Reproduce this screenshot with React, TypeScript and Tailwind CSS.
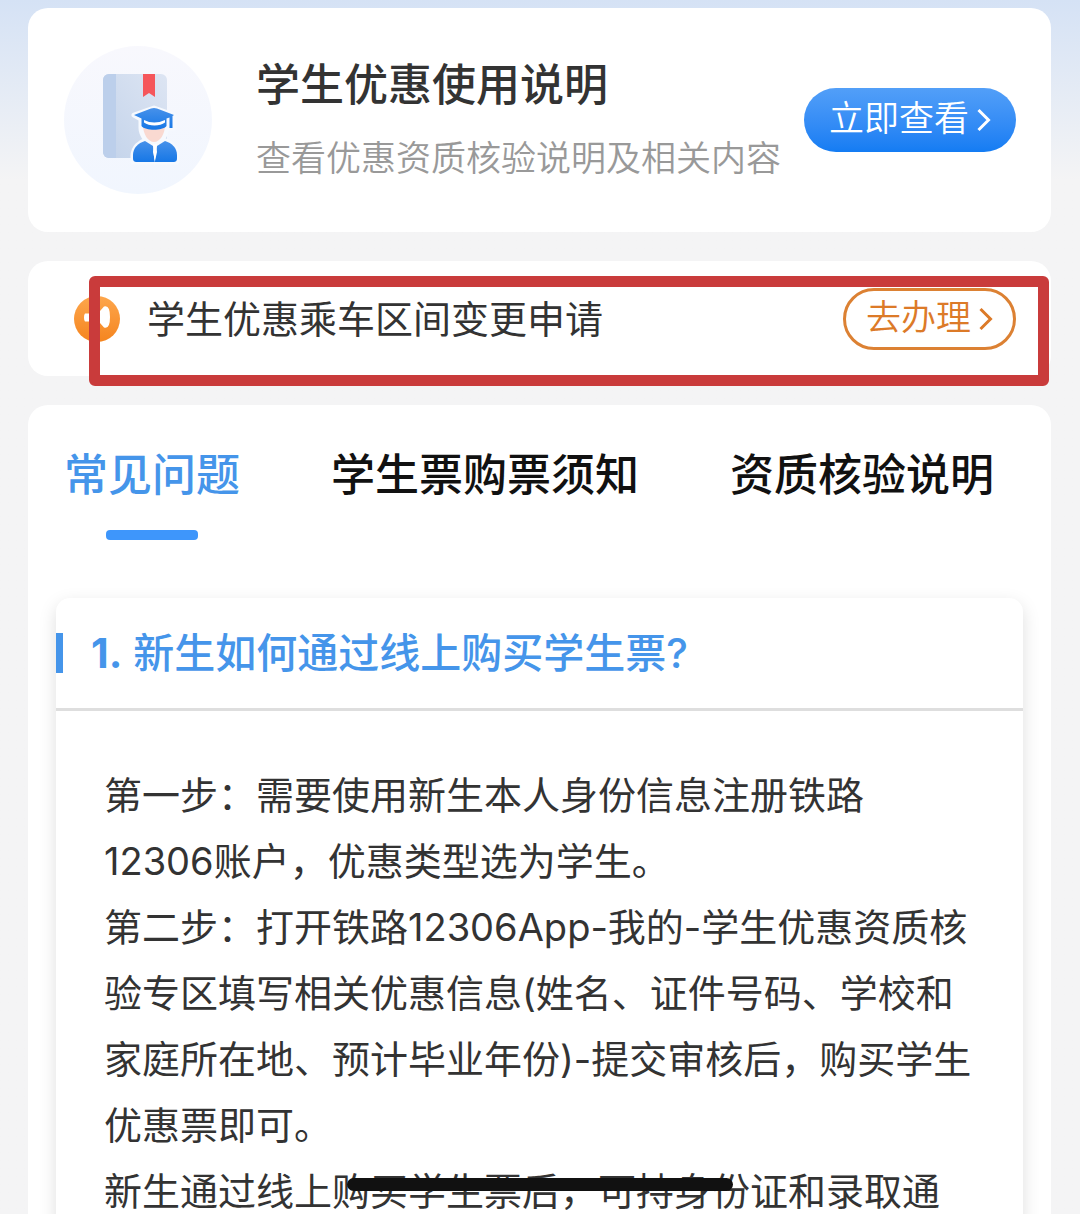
import { useState } from 'react';

type TabId = 'faq' | 'notice' | 'verify';

const TABS: { id: TabId; label: string }[] = [
  { id: 'faq', label: '常见问题' },
  { id: 'notice', label: '学生票购票须知' },
  { id: 'verify', label: '资质核验说明' },
];

export default function App() {
  const [tab, setTab] = useState<TabId>('faq');

  return (
    <main
      lang="zh-CN"
      className="relative flex h-screen flex-col gap-[29px] overflow-hidden bg-[#f4f4f5] bg-linear-to-b from-[#d5e2f5] to-[#f4f4f5] to-[180px] pt-2 pr-[29px] pl-7 font-[Inter,'Noto_Sans_CJK_SC',sans-serif] text-[#333]"
    >
      {/* 使用说明 */}
      <section className="flex h-56 shrink-0 items-center rounded-[20px] bg-white pr-[35px] pl-9">
        <StudentBookIcon />
        <div className="ml-11 min-w-0 flex-1 pt-1">
          <h1 className="text-[44px] leading-[72px] font-medium">学生优惠使用说明</h1>
          <p className="text-[35px] leading-[74px] font-[350] whitespace-nowrap text-[#999]">查看优惠资质核验说明及相关内容</p>
        </div>
        <button
          type="button"
          className="flex h-16 shrink-0 items-center gap-2 rounded-full bg-linear-to-b from-[#529ff8] to-[#137cf3] px-[25px] text-[35px] leading-[56px] font-[350] text-white"
        >
          <span className="pb-1">立即查看</span>
          <Chevron />
        </button>
      </section>

      {/* 区间变更 */}
      <section className="relative flex h-[115px] shrink-0 items-center rounded-[20px] bg-white pr-[35px] pl-[46px]">
        <MegaphoneIcon />
        <h2 className="ml-[27px] flex-1 text-[38px] leading-[60px]">学生优惠乘车区间变更申请</h2>
        <button
          type="button"
          className="flex h-[62px] items-center gap-2 rounded-full border-3 border-[#dc8133] px-5 text-[35px] leading-[52px] font-[350] text-[#dc7a28]"
        >
          <span className="pb-1">去办理</span>
          <Chevron />
        </button>
        <div className="pointer-events-none absolute top-[15px] right-[2px] -bottom-[10px] left-[61px] rounded-md border-11 border-[#c93b3b]" />
      </section>

      {/* 问答 */}
      <section className="flex-1 rounded-t-[20px] bg-white px-7 pt-[37px]">
        <div role="tablist" className="flex gap-[91px] px-2">
          {TABS.map((t) => (
            <button
              key={t.id}
              type="button"
              role="tab"
              aria-selected={tab === t.id}
              onClick={() => setTab(t.id)}
              className={`flex flex-col items-center text-[44px] leading-[66px] font-medium whitespace-nowrap ${
                tab === t.id ? 'text-[#4595ea]' : 'text-[#111]'
              }`}
            >
              {t.label}
              {tab === t.id && <span className="mt-[22px] h-[10px] w-[92px] rounded-[4px] bg-[#3e96fb]" />}
            </button>
          ))}
        </div>

        <article className="mt-[58px] rounded-t-[14px] bg-white shadow-[0_6px_18px_rgba(0,0,0,0.13)]">
          <header className="flex h-[113px] items-center border-b-3 border-[#dedede]">
            <span className="h-10 w-[7px] bg-[#4595ea]" />
            <h3 className="ml-7 text-[41px] leading-[60px] font-medium text-[#4595ea]">
              <span className="font-bold">1.</span> 新生如何通过线上购买学生票?
            </h3>
          </header>
          <div className="pt-[51px] pr-[49px] pl-12 text-[38px] leading-[66px]">
            <p>
              第一步：需要使用新生本人身份信息注册铁路<span className="whitespace-nowrap">12306账户</span>，优惠类型选为学生。
            </p>
            <p>
              第二步：打开铁路12306App-我的-学生优惠资质核验专区填写相关优惠信息(姓名、证件号码、学校和家庭所在地、预计毕业年份)-提交审核后，购买学生优惠票即可。
            </p>
            <p>新生通过线上购买学生票后，可持身份证和录取通</p>
          </div>
        </article>
      </section>

      <div className="fixed bottom-[23px] left-1/2 h-[13px] w-[386px] -translate-x-1/2 rounded-full bg-[#111]" />
    </main>
  );
}

function Chevron() {
  return (
    <svg width="14" height="24" viewBox="0 0 14 24" fill="none" stroke="currentColor" strokeWidth="3" aria-hidden="true">
      <path d="M1.500 2l10 10-10 10" />
    </svg>
  );
}

function StudentBookIcon() {
  return (
    <svg width="148" height="148" viewBox="0 0 148 148" className="shrink-0" aria-hidden="true">
      <defs>
        <linearGradient id="disc" x1="0" y1="0" x2="0" y2="1">
          <stop offset="0" stopColor="#f8f8fd" />
          <stop offset="1" stopColor="#f1f6fe" />
        </linearGradient>
        <linearGradient id="cover" x1="1" y1="0" x2="0" y2="1">
          <stop offset="0" stopColor="#dde5f3" />
          <stop offset="1" stopColor="#c3d3ea" />
        </linearGradient>
        <linearGradient id="gown" x1="0" y1="0" x2="0" y2="1">
          <stop offset="0" stopColor="#4791ea" />
          <stop offset="1" stopColor="#1677e6" />
        </linearGradient>
      </defs>
      <circle cx="74" cy="74" r="74" fill="url(#disc)" />
      <rect x="39" y="28" width="64" height="84" rx="6" fill="url(#cover)" />
      <path d="M45 28h7v84h-7a6 6 0 0 1-6-6V34a6 6 0 0 1 6-6z" fill="#bccfeb" />
      <path d="M79 28h12v23l-6-4-6 4z" fill="#f5565b" />
      {/* 白色描边 */}
      <g fill="#f6f9fe" stroke="#f6f9fe" strokeWidth="5" strokeLinejoin="round">
        <path d="M70 69l20-7 20 7v13h-7c-1 6-3 9-5 12 8 2 15 7 15 16v6H69v-6c0-9 7-14 13-16-2-3-5-6-5-12v-9z" />
      </g>
      <path d="M79 79h22c0 9-5 17-11 17s-11-8-11-17z" fill="#f9d9d1" />
      <path d="M81 95l8 5 1.500 16H73c-3 0-4-1-4-4v-3c0-7 5-12 12-14z" fill="url(#gown)" />
      <path d="M101 95l-8 5-2.500 16H109c3 0 4-1 4-4v-3c0-7-5-12-12-14z" fill="url(#gown)" />
      <path d="M89 98q2 1 4 0l-.5 4 .5 4-2 9-2-9 .5-4z" fill="#fff" />
      <path d="M70 69l17-6.500q3-1.200 6 0L110 69l-1.500 1V82h-3V71.500l-3 1V80c-4 5-21 5-25 0v-7.500z" fill="url(#gown)" />
      <path d="M80 74q10 5 21 0v2.500q-4 3-10.500 3T80 76.500z" fill="#fff" />
    </svg>
  );
}

function MegaphoneIcon() {
  return (
    <svg width="46" height="46" viewBox="0 0 46 46" className="shrink-0" aria-hidden="true">
      <defs>
        <linearGradient id="amber" x1="0" y1="0" x2="0" y2="1">
          <stop offset="0" stopColor="#fda64c" />
          <stop offset="1" stopColor="#f5851f" />
        </linearGradient>
      </defs>
      <circle cx="23" cy="23" r="23" fill="url(#amber)" />
      <path d="M11 17.500h9v8h-9q-1-1-1-4t1-4z" fill="#fff" />
      <path d="M20 15l6 0 4-4.500q6-2 6 10.500t-6 10.500L26 27l-6 0z" fill="#fff" />
    </svg>
  );
}
